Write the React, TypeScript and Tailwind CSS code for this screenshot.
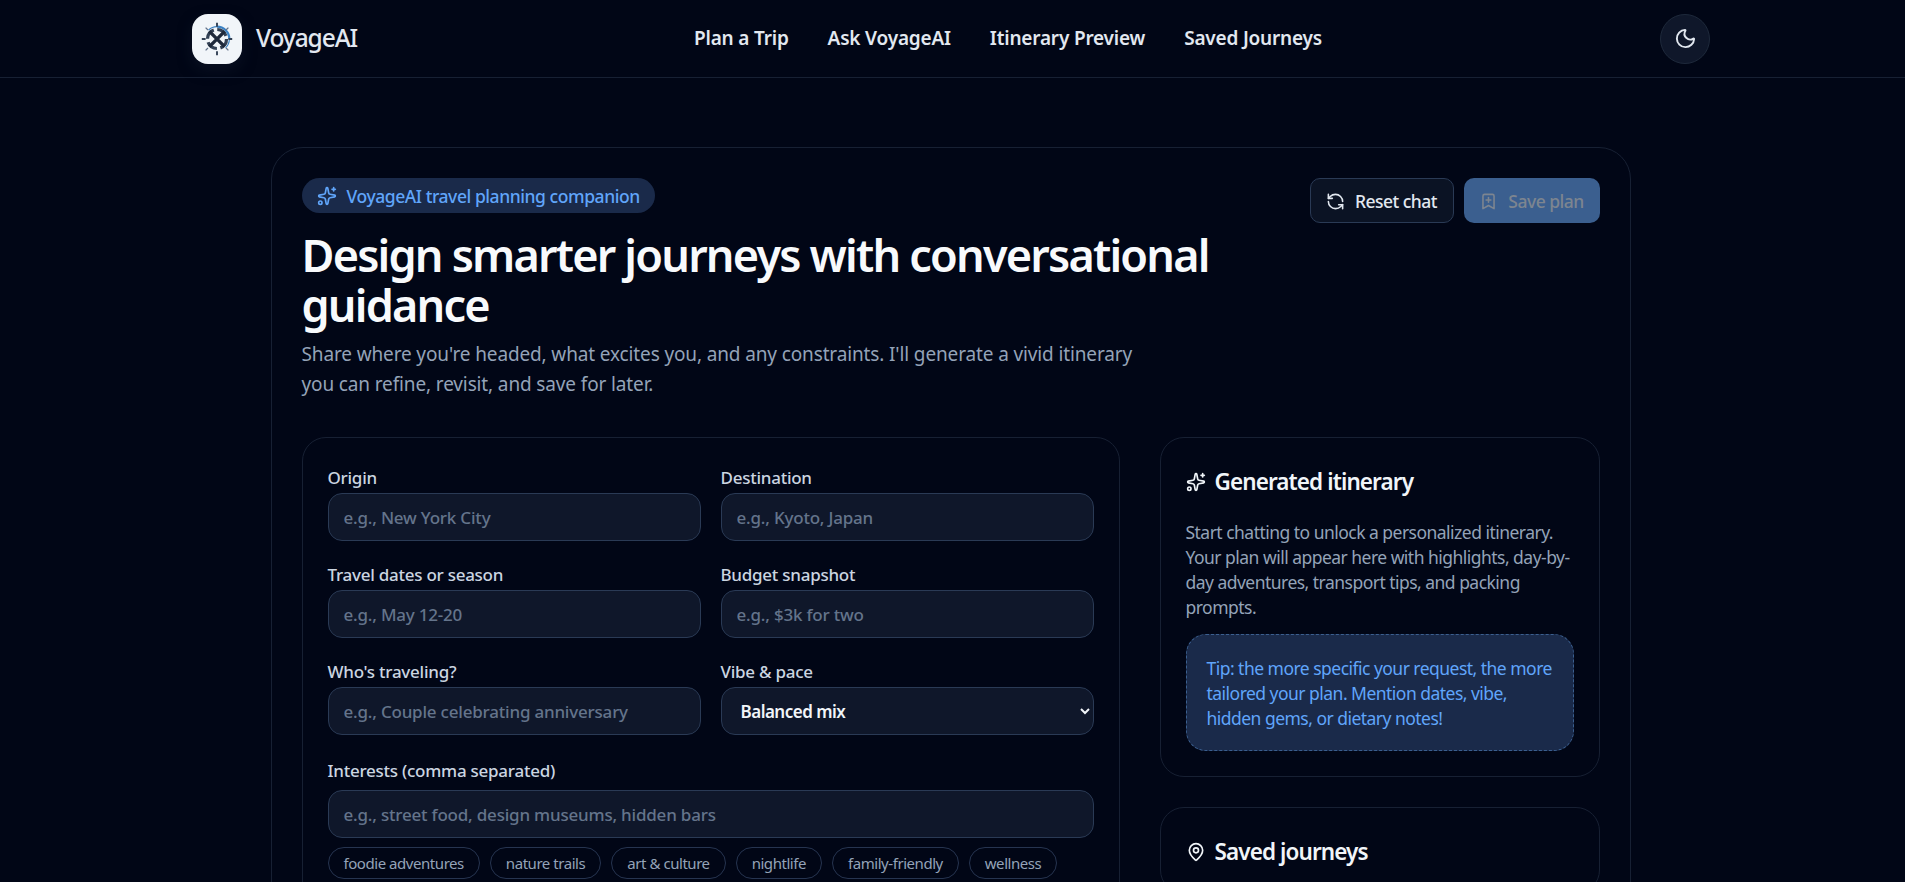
import React from "react"
import { BookmarkPlus, MapPin, Moon, RefreshCcw, Sparkles } from "lucide-react"

const navLinks = ["Plan a Trip", "Ask VoyageAI", "Itinerary Preview", "Saved Journeys"]
const tags = ["foodie adventures", "nature trails", "art & culture", "nightlife", "family-friendly", "wellness"]

const labelClass = "block text-[17px] leading-[24px] font-medium tracking-[-0.015em] text-[#cbd5e1]"
const inputClass = "w-full h-[48px] rounded-[14px] border border-[#2a3a55] bg-[#0f172a] px-[15px] text-[17px] font-medium tracking-[-0.012em] text-[#e2e8f0] placeholder:text-[#64748b] outline-none"

const Logo: React.FC = () => {
    return (
        <div className="w-[50px] h-[50px] rounded-[16px] bg-[#f1f5f9] flex items-center justify-center shadow-[0_6px_14px_rgba(15,23,42,0.6)]">
            <svg viewBox="0 0 40 40" className="w-[38px] h-[38px]" fill="none">
                <path d="M20 7a13 13 0 0 1 13 13" stroke="#3b82c4" strokeWidth="2.4" />
                <path d="M20 7a13 13 0 0 0-9 3.6M33 20a13 13 0 0 1-4 9.4" stroke="#3b82c4" strokeWidth="1.2" />
                <circle cx="20" cy="20" r="10" stroke="#334155" strokeWidth="3.4" strokeDasharray="12 3.7" />
                <path d="M12 12l16 16M28 12L12 28" stroke="#1e293b" strokeWidth="3.6" />
                <path d="M20 3v4M20 33v4M4 20h4M32 20h4" stroke="#334155" strokeWidth="2" />
                <path d="M8 8l2.5 2.5M32 8l-2.5 2.5M8 32l2.5-2.5M32 32l-2.5-2.5" stroke="#64748b" strokeWidth="1.4" />
            </svg>
        </div>
    )
}

const Field: React.FC<{label:string,placeholder:string}> = ({label,placeholder}) => {
    return (
        <div>
            <label className={labelClass + " mb-[3px]"}>{label}</label>
            <input className={inputClass} placeholder={placeholder} />
        </div>
    )
}

export default function App() {
    return (
        <div className="h-screen overflow-hidden bg-[#010616] font-['Noto_Sans',sans-serif] text-[#f1f5f9]">
            <header className="h-[78px] border-b border-[#172033]">
                <div className="ml-[192px] w-[1518px] h-full flex items-center">
                    <div className="w-[502px] flex items-center gap-[14px]">
                        <Logo />
                        <span className="text-[24.5px] font-medium tracking-[-0.045em] text-[#e2e8f0]">VoyageAI</span>
                    </div>
                    <nav className="flex items-center gap-[39px]">
                        {navLinks.map((link)=>{
                            return <a key={link} className="text-[19px] font-semibold tracking-[-0.01em] text-[#e2e8f0]">{link}</a>
                        })}
                    </nav>
                    <button className="ml-auto w-[50px] h-[50px] rounded-full border border-[#1e293b] bg-[#0f172a] flex items-center justify-center text-[#e2e8f0]">
                        <Moon size={23} strokeWidth={2} />
                    </button>
                </div>
            </header>

            <main className="pt-[69px]">
                <section className="ml-[270.5px] w-[1360px] rounded-[32px] border border-[#172033] p-[30px]">
                    <div className="flex justify-between items-start">
                        <div className="w-[1000px]">
                            <span className="inline-flex items-center gap-[10px] h-[35px] rounded-full bg-[#1a2a4a] px-[15px] text-[17.5px] font-medium tracking-[-0.025em] text-[#60a5fa]">
                                <Sparkles size={20} strokeWidth={2} />
                                <span className="mt-[2px]">VoyageAI travel planning companion</span>
                            </span>
                            <h1 className="mt-[17px] w-[960px] text-[45px] leading-[50px] font-semibold tracking-[-0.04em] text-[#f8fafc]">Design smarter journeys with conversational guidance</h1>
                            <p className="mt-[9px] w-[840px] text-[19px] leading-[30px] tracking-[-0.007em] text-[#94a3b8]">Share where you're headed, what excites you, and any constraints. I'll generate a vivid itinerary you can refine, revisit, and save for later.</p>
                        </div>
                        <div className="flex gap-[10px]">
                            <button className="h-[45px] w-[144px] pt-[2px] rounded-[10px] border border-[#2a3a55] bg-[#0b1324] flex items-center justify-center gap-[10px] text-[17.5px] font-medium tracking-[-0.03em] text-[#e2e8f0]">
                                <RefreshCcw size={19} strokeWidth={2} />
                                Reset chat
                            </button>
                            <button className="h-[45px] w-[136px] pt-[2px] rounded-[10px] bg-[#3b5f8f] flex items-center justify-center gap-[10px] text-[17.5px] font-medium tracking-[-0.03em] text-[#7d8590]">
                                <BookmarkPlus size={19} strokeWidth={2} />
                                Save plan
                            </button>
                        </div>
                    </div>

                    <div className="mt-[38px] grid grid-cols-[818px_440px] gap-[40px] items-start">
                        <div className="rounded-[24px] border border-[#172033] px-[25px] pt-[28px] pb-[40px]">
                            <div className="grid grid-cols-2 gap-x-[20px] gap-y-[22px]">
                                <Field label="Origin" placeholder="e.g., New York City" />
                                <Field label="Destination" placeholder="e.g., Kyoto, Japan" />
                                <Field label="Travel dates or season" placeholder="e.g., May 12-20" />
                                <Field label="Budget snapshot" placeholder="e.g., $3k for two" />
                                <Field label="Who's traveling?" placeholder="e.g., Couple celebrating anniversary" />
                                <div>
                                    <label className={labelClass + " mb-[3px]"}>Vibe &amp; pace</label>
                                    <select className="w-full h-[48px] rounded-[14px] border border-[#2a3a55] bg-[#0f172a] pl-[15px] pr-[18px] text-[17px] font-semibold tracking-[-0.03em] text-[#f1f5f9] [color-scheme:dark] outline-none">
                                        <option>Balanced mix</option>
                                    </select>
                                </div>
                            </div>
                            <div className="mt-[24px]">
                                <label className={labelClass + " mb-[7px]"}>Interests (comma separated)</label>
                                <input className={inputClass} placeholder="e.g., street food, design museums, hidden bars" />
                            </div>
                            <div className="mt-[9px] flex flex-wrap gap-[10px]">
                                {tags.map((tag)=>{
                                    return <span key={tag} className="h-[32px] flex items-center rounded-full border border-[#263450] px-[15px] text-[15px] tracking-[-0.03em] text-[#94a3b8]">{tag}</span>
                                })}
                            </div>
                        </div>

                        <div className="flex flex-col gap-[30px]">
                            <div className="rounded-[24px] border border-[#172033] px-[25px] pt-[28px] pb-[25px]">
                                <h2 className="flex items-center gap-[9px] text-[22.5px] leading-[32px] font-semibold tracking-[-0.04em] text-[#f1f5f9]">
                                    <Sparkles size={20} strokeWidth={2} />
                                    Generated itinerary
                                </h2>
                                <p className="mt-[22px] text-[17.5px] leading-[25px] tracking-[-0.03em] text-[#94a3b8]">Start chatting to unlock a personalized itinerary. Your plan will appear here with highlights, day-by-day adventures, transport tips, and packing prompts.</p>
                                <div className="mt-[14px] rounded-[20px] border border-dashed border-[#3b5f8f] bg-[#1a2a4a] px-[20px] pt-[21px] pb-[19px] text-[17.5px] leading-[25px] tracking-[-0.03em] text-[#60a5fa]">Tip: the more specific your request, the more tailored your plan. Mention dates, vibe, hidden gems, or dietary notes!</div>
                            </div>
                            <div className="rounded-[24px] border border-[#172033] px-[25px] pt-[28px] pb-[25px]">
                                <h2 className="flex items-center gap-[9px] text-[22.5px] leading-[32px] font-semibold tracking-[-0.04em] text-[#f1f5f9]">
                                    <MapPin size={20} strokeWidth={2} />
                                    Saved journeys
                                </h2>
                            </div>
                        </div>
                    </div>
                </section>
            </main>
        </div>
    )
}
